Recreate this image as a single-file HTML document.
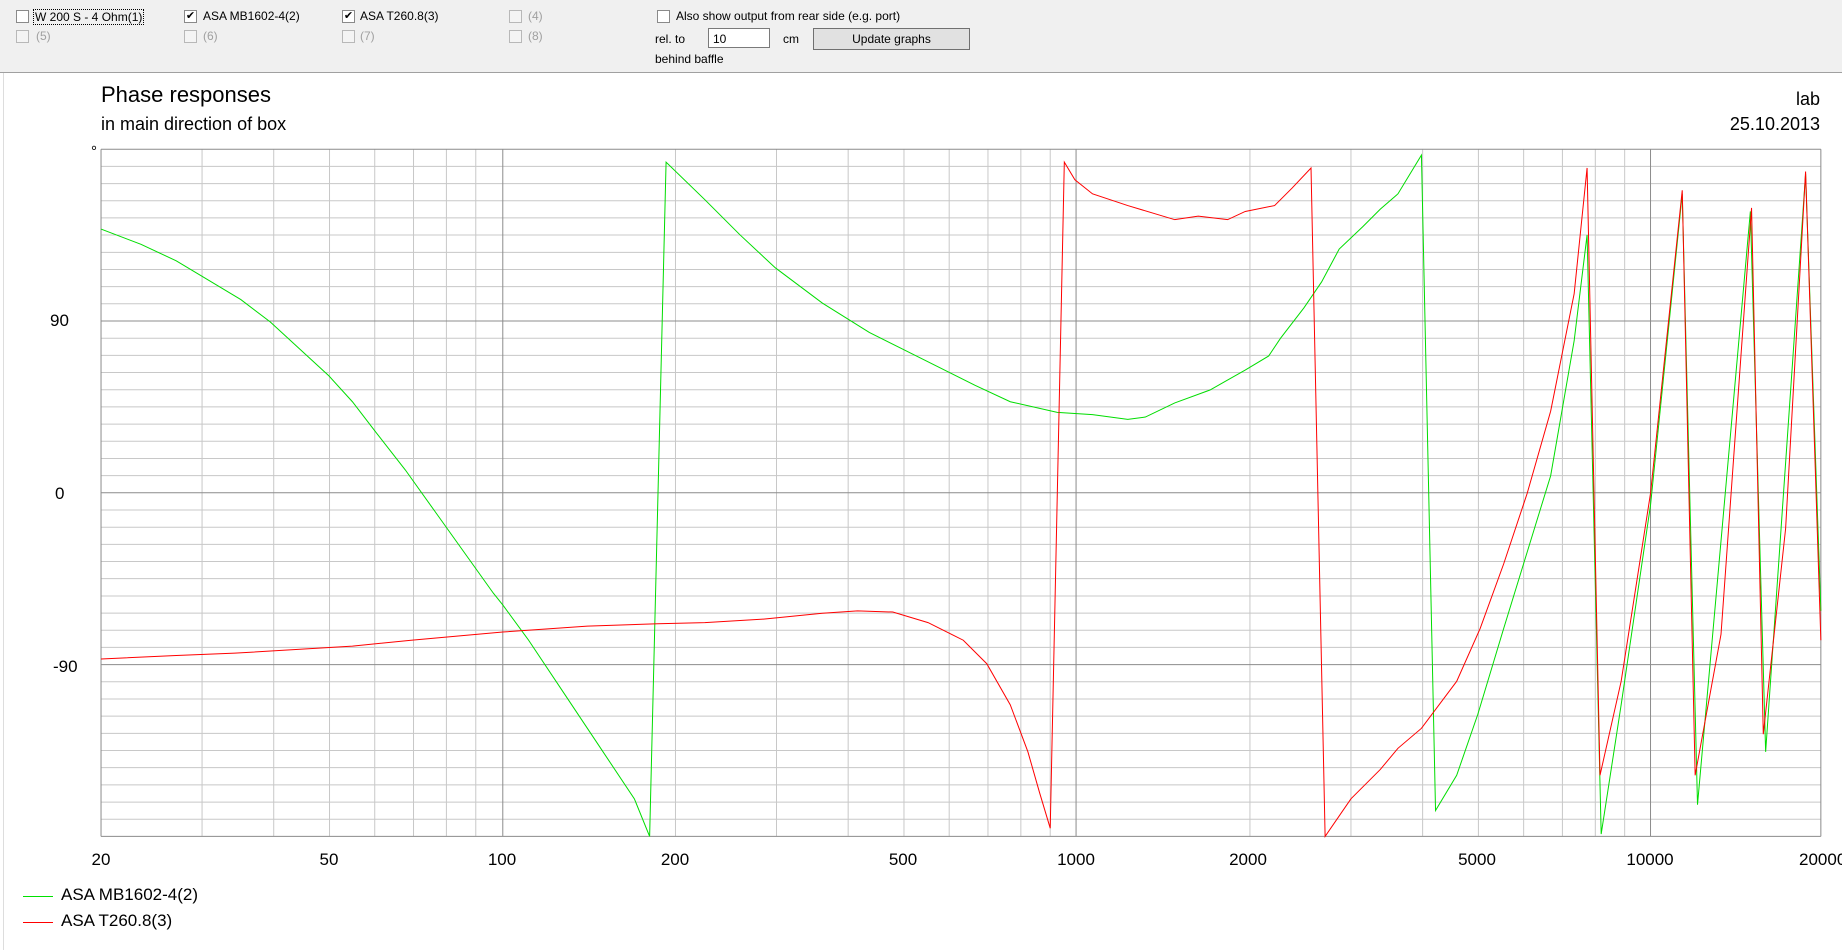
<!DOCTYPE html>
<html><head><meta charset="utf-8"><style>
body{margin:0;width:1842px;height:950px;background:#fff;position:relative;overflow:hidden;font-family:"Liberation Sans",Arial,sans-serif;}
.p{position:absolute;white-space:nowrap;}
#panel{position:absolute;left:0;top:0;width:1842px;height:72px;background:#f0f0f0;border-bottom:1px solid #a0a0a0;}
.cb{position:absolute;width:11px;height:11px;border:1px solid #8a8a8a;background:#fff;font-size:11px;line-height:11px;text-align:center;}
.cb.d{background:#f4f4f4;border-color:#b8b8b8}
.l{position:absolute;font-size:12px;color:#000;}
.g{color:#a0a0a0}
.xl{position:absolute;top:850px;font-size:17px;transform:translateX(-50%);}
</style></head><body>
<div id="panel">
 <div class="cb" style="left:16px;top:10px"></div><div class="l" style="left:33px;top:9px;border:1px dotted #000;padding:0 1px">W 200 S - 4 Ohm(1)</div>
 <div class="cb" style="left:184px;top:10px">✔</div><div class="l" style="left:203px;top:9px">ASA MB1602-4(2)</div>
 <div class="cb" style="left:342px;top:10px">✔</div><div class="l" style="left:360px;top:9px">ASA T260.8(3)</div>
 <div class="cb d" style="left:509px;top:10px"></div><div class="l g" style="left:528px;top:9px">(4)</div>
 <div class="cb d" style="left:16px;top:30px"></div><div class="l g" style="left:36px;top:29px">(5)</div>
 <div class="cb d" style="left:184px;top:30px"></div><div class="l g" style="left:203px;top:29px">(6)</div>
 <div class="cb d" style="left:342px;top:30px"></div><div class="l g" style="left:360px;top:29px">(7)</div>
 <div class="cb d" style="left:509px;top:30px"></div><div class="l g" style="left:528px;top:29px">(8)</div>
 <div class="cb" style="left:657px;top:10px"></div><div class="l" style="left:676px;top:9px">Also show output from rear side (e.g. port)</div>
 <div class="l" style="left:655px;top:32px">rel. to</div>
 <div style="position:absolute;left:708px;top:28px;width:62px;height:20px;background:#fff;border:1px solid #7a7a7a;font-size:12px;line-height:20px;padding-left:4px;box-sizing:border-box">10</div>
 <div class="l" style="left:783px;top:32px">cm</div>
 <div style="position:absolute;left:813px;top:28px;width:157px;height:22px;background:#e1e1e1;border:1px solid #707070;box-sizing:border-box;font-size:12px;text-align:center;line-height:20px">Update graphs</div>
 <div class="l" style="left:655px;top:52px">behind baffle</div>
</div>
<div style="position:absolute;left:3px;top:73px;width:1px;height:877px;background:#ddd"></div>
<div class="p" style="left:101px;top:82px;font-size:22px">Phase responses</div>
<div class="p" style="left:101px;top:114px;font-size:18px">in main direction of box</div>
<div class="p" style="right:22px;top:89px;font-size:18px">lab</div>
<div class="p" style="right:22px;top:114px;font-size:18px">25.10.2013</div>
<div class="p" style="left:91px;top:143px;font-size:15px">°</div>
<div class="p" style="left:50px;top:311px;font-size:17px">90</div>
<div class="p" style="left:55px;top:484px;font-size:17px">0</div>
<div class="p" style="left:53px;top:657px;font-size:17px">-90</div>
<div class="xl" style="left:101px">20</div>
<div class="xl" style="left:329px">50</div>
<div class="xl" style="left:502px">100</div>
<div class="xl" style="left:675px">200</div>
<div class="xl" style="left:903px">500</div>
<div class="xl" style="left:1076px">1000</div>
<div class="xl" style="left:1248px">2000</div>
<div class="xl" style="left:1477px">5000</div>
<div class="xl" style="left:1650px">10000</div>
<div class="p" style="left:1799px;top:850px;font-size:17px">20000</div>
<div style="position:absolute;left:23px;top:896px;width:30px;height:1px;background:#00e000"></div>
<div class="p" style="left:61px;top:885px;font-size:17px">ASA MB1602-4(2)</div>
<div style="position:absolute;left:23px;top:922px;width:30px;height:1px;background:#f00"></div>
<div class="p" style="left:61px;top:911px;font-size:17px">ASA T260.8(3)</div>
<svg style="position:absolute;left:0;top:0" width="1842" height="950" viewBox="0 0 1568 808.7" preserveAspectRatio="none">
<g stroke="#c8c8c8" vector-effect="non-scaling-stroke" fill="none">
<path vector-effect="non-scaling-stroke" d="M172,127V712M233,127V712M280.5,127V712M319,127V712M352,127V712M380,127V712M405,127V712M575,127V712M661,127V712M722,127V712M769.5,127V712M808,127V712M841,127V712M869,127V712M894,127V712M1064,127V712M1150,127V712M1211,127V712M1258.5,127V712M1297,127V712M1330,127V712M1358,127V712M1383,127V712"/>
<path vector-effect="non-scaling-stroke" d="M86,141.6H1550M86,156.3H1550M86,170.9H1550M86,185.5H1550M86,200.1H1550M86,214.8H1550M86,229.4H1550M86,244H1550M86,258.6H1550M86,287.9H1550M86,302.5H1550M86,317.1H1550M86,331.8H1550M86,346.4H1550M86,361H1550M86,375.6H1550M86,390.3H1550M86,404.9H1550M86,434.1H1550M86,448.8H1550M86,463.4H1550M86,478H1550M86,492.6H1550M86,507.3H1550M86,521.9H1550M86,536.5H1550M86,551.1H1550M86,580.4H1550M86,595H1550M86,609.6H1550M86,624.3H1550M86,638.9H1550M86,653.5H1550M86,668.1H1550M86,682.8H1550M86,697.4H1550"/>
</g>
<path stroke="#8c8c8c" fill="none" vector-effect="non-scaling-stroke" d="M86,127V712M428,127V712M916,127V712M1405,127V712M1550,127V712M86,127H1550M86,273.3H1550M86,419.5H1550M86,565.8H1550M86,712H1550"/>
<path stroke="#00dd00" fill="none" vector-effect="non-scaling-stroke" d="M86,195L120,208L150,222L180,240L205,255L230,274L255,297L280,320L300,342L320,368L345,400L370,435L395,470L420,505L428,515L450,545L480,590L510,635L540,680L553,712L567,138L600,170L630,200L660,228L700,258L740,283L770,298L800,313L830,328L860,342L900,351L930,353L960,357L975,355L1000,343L1030,332L1060,315L1080,303L1090,288L1110,262L1125,240L1140,212L1160,193L1175,178L1190,165L1210,132L1222,690L1240,660L1258,608L1280,535L1300,470L1320,405L1340,290L1351,200L1363,710L1380,600L1405,430L1432,165L1445,685L1490,180L1503,640L1537,148L1550,520"/>
<path stroke="#ff0000" fill="none" vector-effect="non-scaling-stroke" d="M86,561L150,558L200,556L300,550L350,545L428,538L500,533L560,531L600,530L650,527L700,522L730,520L760,521L790,530L820,545L840,565L860,600L875,640L885,675L894,705L906,138L915,153L930,165L960,175L1000,187L1020,184L1045,187L1060,180L1085,175L1100,160L1116,143L1128,712L1150,680L1175,655L1190,637L1210,620L1225,600L1240,580L1260,535L1280,480L1300,420L1320,350L1340,250L1351,143L1362,660L1380,580L1405,420L1432,162L1443,660L1465,540L1491,177L1501,625L1520,450L1537,146L1550,545"/>
</svg>
</body></html>
